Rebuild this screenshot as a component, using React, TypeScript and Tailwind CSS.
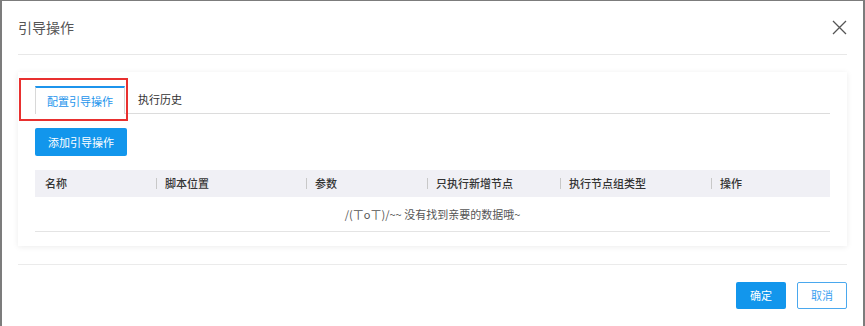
import React from "react";

const columns = ["名称", "脚本位置", "参数", "只执行新增节点", "执行节点组类型", "操作"];

export default function App() {
  return (
    <div className="relative h-[326px] w-[865px] overflow-hidden border-t border-l-2 border-r-2 border-[#7c7c7c] bg-white px-4 font-['Microsoft_YaHei','Noto_Sans_CJK_SC',sans-serif] text-[11px] text-[#333]">
      {/* window accent */}
      <div className="absolute -left-[2px] top-0 h-[30px] w-[2px] bg-[#1d4f7c]" />

      {/* Header */}
      <div className="flex h-[54px] items-center justify-between border-b border-[#e8e8e8]">
        <span className="text-[14px] text-[#555]">引导操作</span>
        <svg width="15" height="15" viewBox="0 0 15 15">
          <path d="M1 1 L14 14 M14 1 L1 14" stroke="#555" strokeWidth="1.3" fill="none" />
        </svg>
      </div>

      {/* Card */}
      <div className="mt-[17px] h-[174px] bg-white px-[17px] pt-[15px] shadow-[0_1px_6px_rgba(0,0,0,0.08)]">
        {/* Tabs */}
        <div className="flex h-[27px] items-end border-b border-[#dcdcdc]">
          <div className="-mb-px flex h-[28px] w-[90px] items-center justify-center border-x border-t-2 border-x-[#d8d8d8] border-t-[#1c94ec] bg-white text-[#1c94ec]">
            配置引导操作
          </div>
          <div className="flex h-[27px] items-center pl-[13px] text-[#333]">执行历史</div>
        </div>

        <button
          type="button"
          className="mt-[14px] h-[28px] w-[92px] rounded-[2px] bg-[#1296ec] text-[11px] text-white"
        >
          添加引导操作
        </button>

        {/* Table */}
        <div className="mt-[14px]">
          <div className="grid h-[27px] grid-cols-[121px_150px_121px_133px_151px_1fr] items-center bg-[#f0f0f5] font-medium text-[#333]">
            {columns.map((c, i) => (
              <div key={c} className="flex items-center">
                {i > 0 ? (
                  <span className="mr-[8px] h-[11px] w-px bg-[#c8c8c8]" />
                ) : (
                  <span className="w-[10px]" />
                )}
                {c}
              </div>
            ))}
          </div>
          <div className="flex h-[35px] items-center justify-center border-b border-[#e4e4e4] text-[#555]">
            /(ㄒoㄒ)/~~ 没有找到亲要的数据哦~
          </div>
        </div>
      </div>

      {/* Footer */}
      <div className="mt-[18px] flex justify-end gap-[11px] border-t border-[#ebebeb] pt-[17px]">
        <button type="button" className="h-[27px] w-[50px] rounded-[2px] bg-[#1296ec] text-white">
          确定
        </button>
        <button
          type="button"
          className="h-[27px] w-[50px] rounded-[2px] border border-[#4aa8ee] bg-white text-[#3c9ff0]"
        >
          取消
        </button>
      </div>

      {/* highlight box */}
      <div className="absolute left-[17px] top-[77px] h-[43px] w-[109px] border-2 border-[#e8302f]" />
    </div>
  );
}
